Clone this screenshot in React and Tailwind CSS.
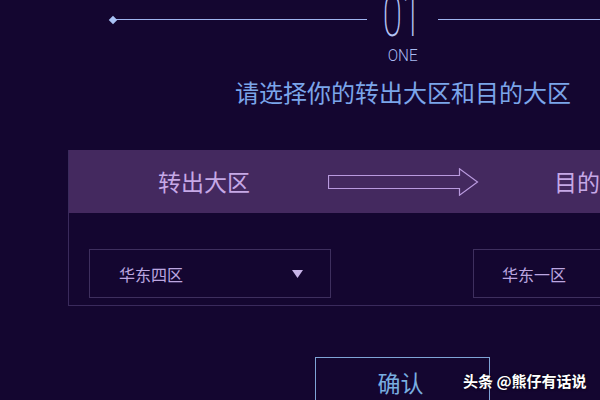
export default function App() {
  const cjk = { fontFamily: '"Noto Sans CJK SC", "Noto Sans", sans-serif' };
  return (
    <div className="relative w-[600px] h-[400px] overflow-hidden bg-[#140630] flex flex-col" style={cjk}>
      {/* top ornament */}
      <div className="h-[39px] shrink-0 flex items-center pl-[110px]">
        <div className="w-[6px] h-[6px] rotate-45 bg-[#a9c2f5] shrink-0" />
        <div className="w-[251px] h-px bg-[#9fb4ef] shrink-0" />
        <div className="w-[71px] h-[39px] shrink-0 flex justify-center self-start">
          <span
            className="text-[60px] h-[40px] leading-[40px] -mt-[4px] text-[#b4c3f4] font-extralight inline-block scale-x-[0.58]"
            style={{ fontFamily: 'Roboto, "DejaVu Sans", sans-serif' }}
          >
            01
          </span>
        </div>
        <div className="flex-1 h-px bg-[#9fb4ef]" />
      </div>
      <div className="shrink-0 flex flex-col items-center pl-[206px]">
        <div
          className="mt-[6px] text-[17px] leading-[20px] text-[#a9b9f0] font-light scale-x-[0.9]"
          style={{ fontFamily: 'Roboto, "Liberation Sans", sans-serif' }}
        >
          ONE
        </div>
        <div className="mt-[11px] text-[24px] leading-[32px] text-[#7ba5ea] whitespace-nowrap">
          请选择你的转出大区和目的大区
        </div>
      </div>

      {/* panel */}
      <div className="mt-[42px] ml-[68px] w-[600px] shrink-0 border-l border-b border-[#3a2a5c]">
        <div className="h-[63px] bg-[#44295f] flex items-center pl-[89px]">
          <span className="text-[23px] text-[#c6a8e6] whitespace-nowrap leading-none">转出大区</span>
          <svg className="ml-[78px] shrink-0" width="151" height="28" viewBox="0 0 151 28">
            <path
              d="M0.5 7.5 H131.5 V0.8 L149.5 14 L131.5 27.2 V20.5 H0.5 Z"
              fill="none"
              stroke="#b99ade"
              strokeWidth="1.2"
            />
          </svg>
          <span className="ml-[75px] text-[23px] text-[#c6a8e6] whitespace-nowrap leading-none">目的大区</span>
        </div>
        <div className="h-[92px] pt-[36px] pl-[20px] flex items-start">
          <div className="w-[242px] h-[49px] border border-[#3e2f5e] flex items-center pl-[29px] pr-[27px] justify-between shrink-0">
            <span className="text-[16px] text-[#bca6e0]">华东四区</span>
            <svg width="11" height="8" viewBox="0 0 11 8">
              <path d="M0 0 H11 L5.5 8 Z" fill="#c8b4e8" />
            </svg>
          </div>
          <div className="ml-[142px] w-[200px] h-[49px] border border-[#3e2f5e] flex items-center pl-[28px] shrink-0">
            <span className="text-[16px] text-[#bca6e0]">华东一区</span>
          </div>
        </div>
      </div>

      {/* button + watermark */}
      <div className="mt-[51px] ml-[315px] w-[175px] h-[60px] shrink-0 border border-[#7fa4d6] flex justify-center pt-[9px]">
        <span className="text-[23px] leading-[30px] text-[#79aee0] -ml-[4px]">确认</span>
      </div>
      <div
        className="absolute left-[463px] top-[370px] text-[15px] leading-[22px] text-white font-bold whitespace-nowrap"
        style={{ textShadow: '0 0 3px rgba(0,0,0,0.9)' }}
      >
        头条 @熊仔有话说
      </div>
    </div>
  );
}
